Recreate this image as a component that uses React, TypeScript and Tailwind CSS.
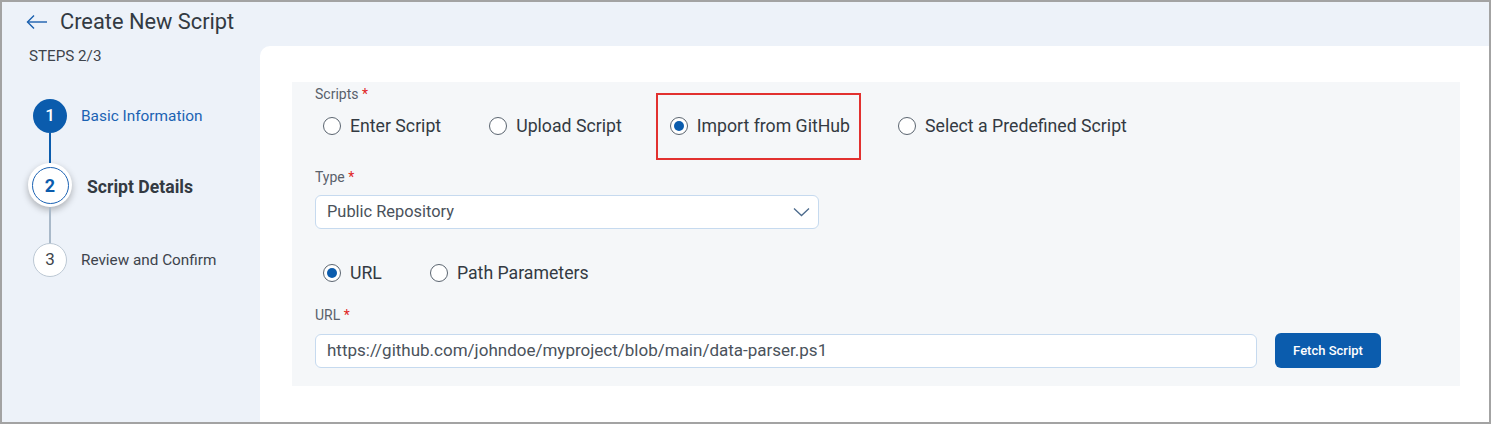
import React from "react";

const font = { fontFamily: "Roboto, 'Noto Sans', sans-serif" };

function Radio({ label, checked }: { label: string; checked?: boolean }) {
  return (
    <div className="flex items-center gap-[9px]">
      <span className="w-[18px] h-[18px] rounded-full border-[1.5px] border-[#5b6570] bg-white flex items-center justify-center">
        {checked && <span className="w-[10px] h-[10px] rounded-full bg-[#0b5cad]" />}
      </span>
      <span className="text-[17.7px] text-[#333a42]">{label}</span>
    </div>
  );
}

function Label({ text }: { text: string }) {
  return (
    <div className="text-[14px] leading-4 text-[#59616b]">
      {text} <span className="text-[#e02424]">*</span>
    </div>
  );
}

export default function App() {
  return (
    <div
      style={font}
      className="w-[1491px] h-[424px] border-2 border-[#a3a3a3] bg-[#edf2f9] flex flex-col overflow-hidden"
    >
      <div className="h-[44px] flex items-start pt-[7px] pl-[24px] gap-[12px]">
        <svg width="22" height="26" viewBox="0 0 22 26" fill="none" stroke="#1a5fae" strokeWidth="1.4">
          <path d="M1.5 13H21" />
          <path d="M8 6.5L1.5 13L8 19.5" />
        </svg>
        <h1 className="text-[21.8px] leading-[26px] text-[#333a42]">Create New Script</h1>
      </div>

      <div className="flex flex-1">
        <aside className="w-[258px] pl-[26px]">
          <div className="text-[15.2px] leading-5 text-[#3d444c] pl-[1px]">STEPS 2/3</div>

          <div className="mt-[33px] flex flex-col">
            <div className="flex items-center">
              <div className="w-[44px] flex justify-center">
                <span className="w-[34px] h-[34px] rounded-full bg-[#0b5cad] text-white text-[17px] font-medium flex items-center justify-center">
                  1
                </span>
              </div>
              <span className="ml-[9px] mt-[1px] text-[15.4px] text-[#1b62b3]">Basic Information</span>
            </div>
            <div className="w-[44px] flex justify-center">
              <span className="w-[2px] h-[30px] bg-[#0b5cad]" />
            </div>
            <div className="flex items-center">
              <div className="w-[44px] h-[44px] rounded-full bg-white shadow-[0_3px_7px_rgba(0,0,0,0.28)] flex items-center justify-center">
                <span className="w-[37px] h-[37px] rounded-full border border-[#1b62b3] text-[#0b5cad] text-[18px] font-bold flex items-center justify-center">
                  2
                </span>
              </div>
              <span className="ml-[15px] mt-[4px] text-[17.6px] font-bold text-[#333a42]">Script Details</span>
            </div>
            <div className="w-[44px] flex justify-center">
              <span className="w-[2px] h-[36px] bg-[#a9b9c9]" />
            </div>
            <div className="flex items-center">
              <div className="w-[44px] flex justify-center">
                <span className="w-[34px] h-[34px] rounded-full bg-white border border-[#bcc8d4] text-[#3d444c] text-[17px] flex items-center justify-center">
                  3
                </span>
              </div>
              <span className="ml-[9px] text-[15.3px] text-[#3d444c]">Review and Confirm</span>
            </div>
          </div>
        </aside>

        <main className="flex-1 bg-white rounded-tl-[10px] pl-[32px] pr-[29px] pt-[36px]">
          <div className="bg-[#f5f7f9] pl-[23px] pt-[4px] pb-[18px]">
            <Label text="Scripts" />
            <div className="mt-[3px] h-[42px] flex items-center gap-[48px] pl-[8px]">
              <Radio label="Enter Script" />
              <Radio label="Upload Script" />
              <div className="relative">
                <Radio label="Import from GitHub" checked />
                <span className="absolute -left-[14px] -right-[11px] -top-[20px] -bottom-[21px] border-2 border-[#e2312f]" />
              </div>
              <Radio label="Select a Predefined Script" />
            </div>

            <div className="mt-[22px]">
              <Label text="Type" />
            </div>
            <div className="mt-[10px] w-[504px] h-[34px] bg-white border border-[#c6daef] rounded-[6px] flex items-center justify-between pl-[11px] pr-[8px]">
              <span className="text-[16.4px] text-[#4a525b]">Public Repository</span>
              <svg width="17" height="10" viewBox="0 0 17 10" fill="none" stroke="#4b6a8c" strokeWidth="1.3">
                <path d="M1 1.5L8.5 8.5L16 1.5" />
              </svg>
            </div>

            <div className="mt-[23px] h-[42px] flex items-center gap-[48px] pl-[8px]">
              <Radio label="URL" checked />
              <Radio label="Path Parameters" />
            </div>

            <div className="mt-[13px]">
              <Label text="URL" />
            </div>
            <div className="mt-[10px] flex items-center gap-[18px]">
              <div className="w-[942px] h-[34px] bg-white border border-[#c6daef] rounded-[6px] flex items-center pl-[11px]">
                <span className="text-[17px] text-[#4a525b]">
                  https://github.com/johndoe/myproject/blob/main/data-parser.ps1
                </span>
              </div>
              <button className="w-[106px] h-[35px] bg-[#0b5cad] rounded-[6px] text-white text-[13px] font-medium">
                Fetch Script
              </button>
            </div>
          </div>
        </main>
      </div>
    </div>
  );
}
